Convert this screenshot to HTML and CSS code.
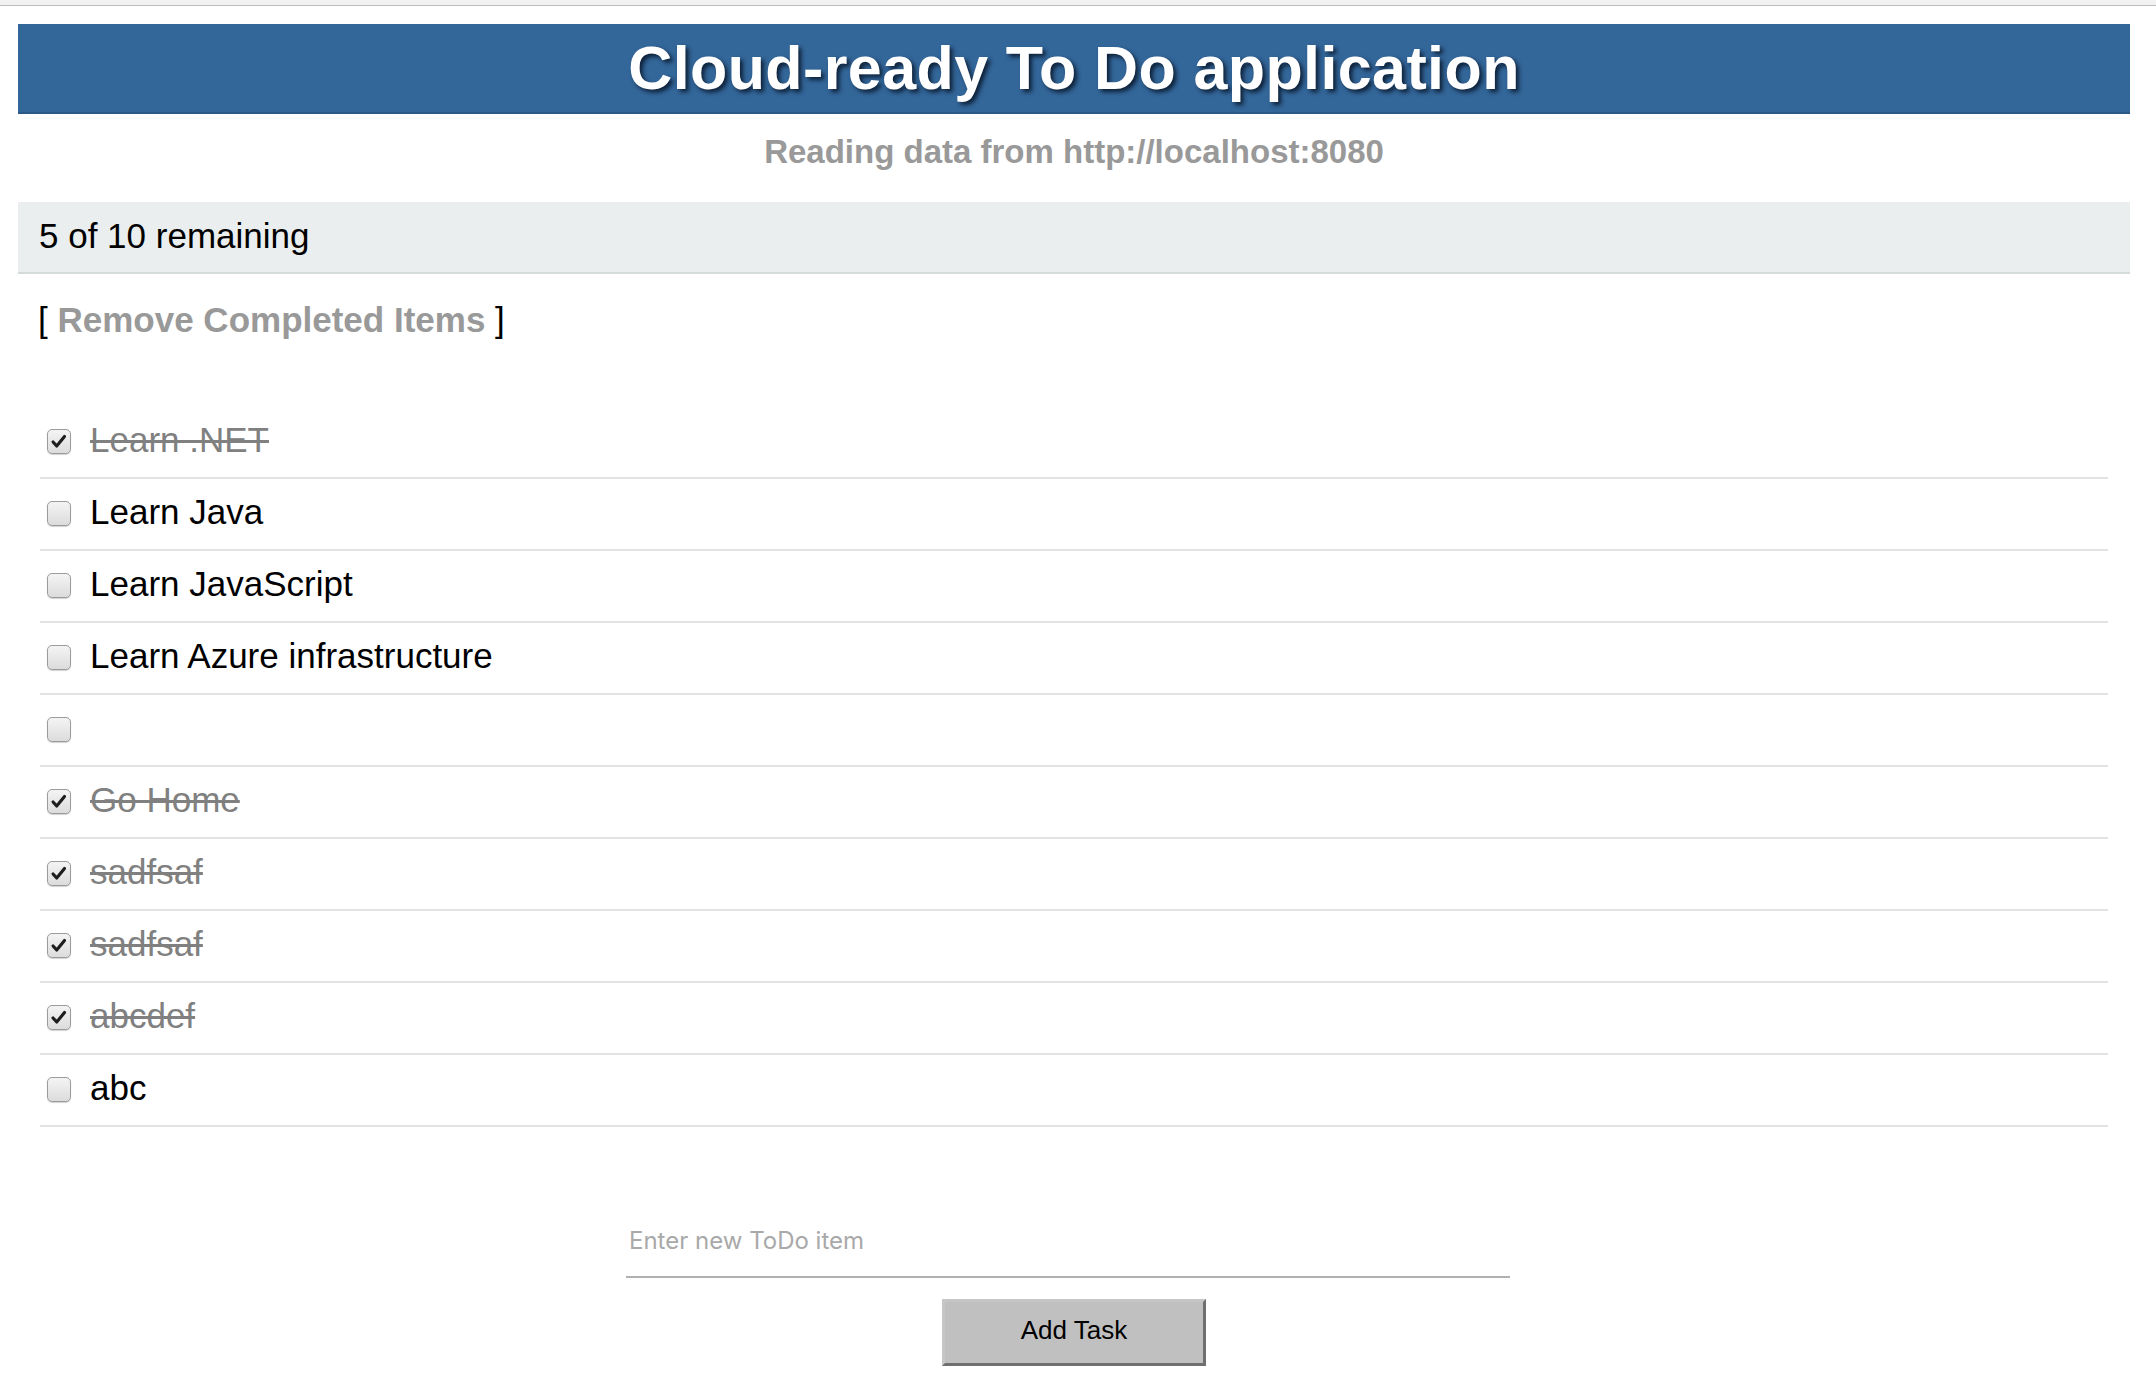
FILE: index.html
```html
<!DOCTYPE html>
<html>
<head>
<meta charset="utf-8">
<title>Cloud-ready To Do application</title>
<link rel="stylesheet" href="styles.css">
</head>
<body>
<div class="chrome"></div>
<div class="page">
  <h1 class="title">Cloud-ready To Do application</h1>
  <p class="source">Reading data from http://localhost:8080</p>
  <div class="summary">5 of 10 remaining</div>
  <div class="actions">[ <a class="remove">Remove Completed Items</a> ]</div>
  <ul class="todos">
    <li class="todo done"><span class="box checked"><svg viewBox="0 0 24 24"><path d="M5.5 12.5 L9.5 17 L18 6.5" /></svg></span><span class="label">Learn .NET</span></li>
    <li class="todo"><span class="box"></span><span class="label">Learn Java</span></li>
    <li class="todo"><span class="box"></span><span class="label">Learn JavaScript</span></li>
    <li class="todo"><span class="box"></span><span class="label">Learn Azure infrastructure</span></li>
    <li class="todo"><span class="box"></span><span class="label"></span></li>
    <li class="todo done"><span class="box checked"><svg viewBox="0 0 24 24"><path d="M5.5 12.5 L9.5 17 L18 6.5" /></svg></span><span class="label">Go Home</span></li>
    <li class="todo done"><span class="box checked"><svg viewBox="0 0 24 24"><path d="M5.5 12.5 L9.5 17 L18 6.5" /></svg></span><span class="label">sadfsaf</span></li>
    <li class="todo done"><span class="box checked"><svg viewBox="0 0 24 24"><path d="M5.5 12.5 L9.5 17 L18 6.5" /></svg></span><span class="label">sadfsaf</span></li>
    <li class="todo done"><span class="box checked"><svg viewBox="0 0 24 24"><path d="M5.5 12.5 L9.5 17 L18 6.5" /></svg></span><span class="label">abcdef</span></li>
    <li class="todo"><span class="box"></span><span class="label">abc</span></li>
  </ul>
  <form class="add-form">
    <input class="new-item" type="text" placeholder="Enter new ToDo item">
    <button class="add-btn" type="button">Add Task</button>
  </form>
</div>
</body>
</html>
```

FILE: styles.css
```css
html, body {
  margin: 0;
  padding: 0;
  background: #ffffff;
}

body {
  font-family: "Liberation Sans", Arial, sans-serif;
  color: #000;
}

.chrome {
  height: 5px;
  background: #f2f2f2;
  border-bottom: 1px solid #bcbcbc;
}

.page {
  margin: 0 26px 0 18px;
  padding-top: 18px;
}

.title {
  margin: 0;
  height: 88px;
  line-height: 88px;
  background: #336699;
  border-bottom: 2px solid #2c5a88;
  color: #fff;
  font-size: 61px;
  letter-spacing: 0.4px;
  font-weight: bold;
  text-align: center;
  text-shadow: 3px 3px 4px rgba(10, 25, 45, 0.9);
}

.source {
  margin: 18px 0 0;
  line-height: 40px;
  font-size: 33px;
  font-weight: bold;
  color: #999999;
  text-align: center;
}

.summary {
  margin-top: 30px;
  height: 70px;
  line-height: 68px;
  padding-left: 21px;
  background: #ebeeee;
  border-bottom: 2px solid #d5dada;
  font-size: 35px;
}

.actions {
  margin-top: 26px;
  padding-left: 20px;
  line-height: 40px;
  font-size: 35px;
}

.remove {
  font-weight: bold;
  color: #999999;
  cursor: pointer;
}

.todos {
  list-style: none;
  margin: 67px 22px 0;
  padding: 0;
}

.todo {
  display: flex;
  align-items: center;
  height: 70px;
  border-bottom: 2px solid #e3e3e3;
  font-size: 35px;
}

.box {
  flex: none;
  width: 22px;
  height: 23px;
  margin: 0 19px 0 7px;
  border: 1px solid #9b9b9b;
  border-radius: 5px;
  background: linear-gradient(#f4f4f4, #dcdcdc);
  box-shadow: 0 1px 1px rgba(0, 0, 0, 0.18);
  position: relative;
  top: -1px;
}

.box svg {
  display: block;
  width: 22px;
  height: 23px;
}

.box svg path {
  fill: none;
  stroke: #1e1e1e;
  stroke-width: 3.4;
  stroke-linecap: round;
  stroke-linejoin: round;
}

.label {
  line-height: 66px;
  padding-bottom: 4px;
}

.done .label {
  color: #808080;
  text-decoration: line-through;
}

.add-form {
  display: flex;
  flex-direction: column;
  align-items: center;
  margin-top: 83px;
}

.new-item {
  box-sizing: border-box;
  width: 884px;
  height: 68px;
  margin-right: 12px;
  padding: 0 3px 5px;
  border: none;
  border-bottom: 2px solid #b0b0b0;
  outline: none;
  font-family: "Inter", "Liberation Sans", sans-serif;
  font-size: 24px;
  background: transparent;
}

.new-item::placeholder {
  color: #a9a9a9;
}

.add-btn {
  box-sizing: border-box;
  width: 264px;
  height: 67px;
  margin-top: 21px;
  background: #c0c0c0;
  border-style: solid;
  border-width: 3px;
  border-color: #c6c6c6 #6f6f6f #6f6f6f #c6c6c6;
  font-family: "Liberation Sans", Arial, sans-serif;
  font-size: 26px;
  color: #000;
  padding: 0 0 4px;
}
```
